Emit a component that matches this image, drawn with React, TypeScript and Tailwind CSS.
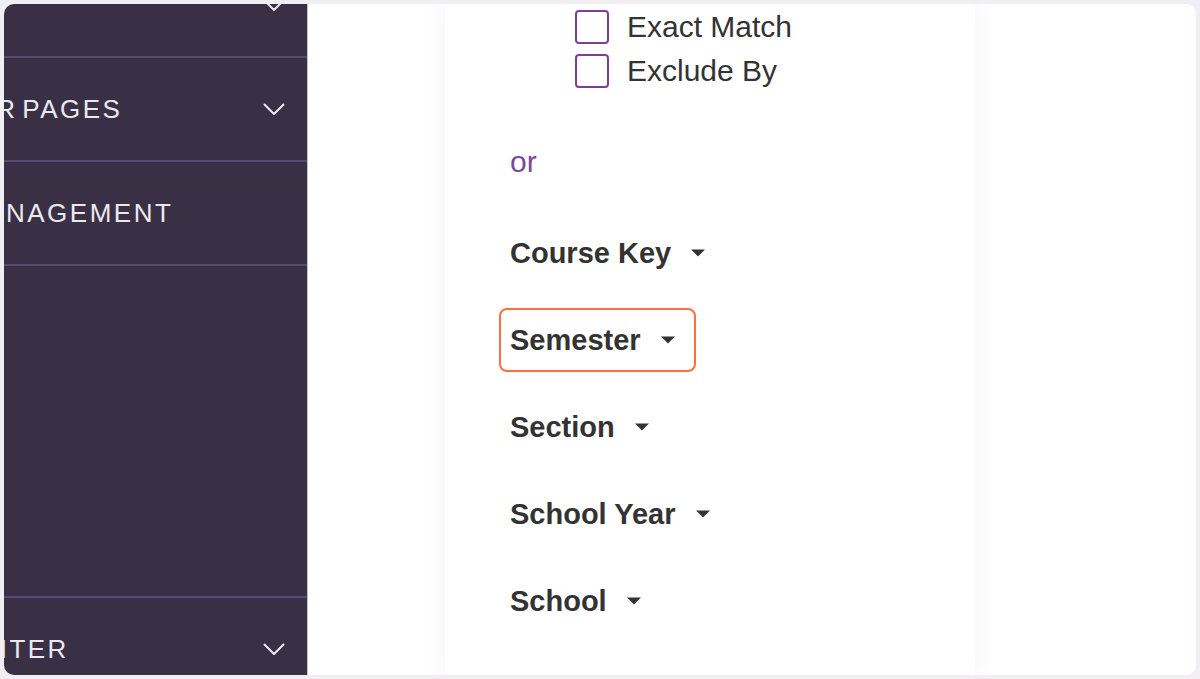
import React from 'react';

const Chevron = () => (
  <svg width="22" height="13" viewBox="0 0 22 13" fill="none" className="shrink-0">
    <polyline points="1.5,1.5 11,11 20.5,1.5" stroke="#ebe9ee" strokeWidth="2" strokeLinecap="round" strokeLinejoin="round" />
  </svg>
);

const Caret = () => (
  <svg width="16" height="8" viewBox="0 0 16 8" className="shrink-0 ml-[19px]">
    <polygon points="1,0.5 15,0.5 8,7.5" fill="#333333" />
  </svg>
);

function NavRow({ label, offset, chevron, className }: { label: string; offset: string; chevron?: boolean; className?: string }) {
  return (
    <div className={`h-[104px] shrink-0 flex items-center justify-between pr-[22px] border-[#574a76] ${className ?? ''}`}>
      <span className={`whitespace-nowrap text-[26px] tracking-[2.5px] [word-spacing:-5px] text-[#ebe9ee] ${offset}`}>{label}</span>
      {chevron && <Chevron />}
    </div>
  );
}

function Filter({ label, active }: { label: string; active?: boolean }) {
  return (
    <div className="relative inline-flex h-[64px] items-center self-start">
      <span className="text-[29px] font-bold text-[#333333] leading-none">{label}</span>
      <Caret />
      {active && (
        <div className="absolute top-0 bottom-0 -left-[11px] -right-[20px] rounded-[8px] border-[2.5px] border-[#ff6f3c]" />
      )}
    </div>
  );
}

export default function App() {
  return (
    <div
      className="w-[1200px] h-[679px] bg-[#f1eff4] p-[4px]"
      style={{ fontFamily: '"Liberation Sans", Arial, sans-serif' }}
    >
      <div className="flex h-full overflow-hidden rounded-[10px] bg-white">
        <aside className="w-[304px] shrink-0 overflow-hidden flex flex-col bg-[#3a3046] border-r border-[#c4c0ca]">
          <NavRow label="" offset="" chevron className="-mt-[50px] border-b-2" />
          <NavRow label="OTHER PAGES" offset="-ml-[90px]" chevron className="border-b-2" />
          <NavRow label="MANAGEMENT" offset="-ml-[42px]" className="border-b-2" />
          <div className="h-[330px] shrink-0" />
          <NavRow label="CENTER" offset="-ml-[57px]" chevron className="border-t-2" />
        </aside>

        <main className="flex-1 h-full">
          <div className="ml-[137px] w-[530px] h-full bg-white shadow-[0_0_22px_rgba(0,0,0,0.05)] pl-[65px] flex flex-col">
            <div className="pl-[65px] pt-[1px] flex flex-col">
              {['Exact Match', 'Exclude By'].map((t) => (
                <label key={t} className="h-[44px] flex items-center gap-[18px]">
                  <span className="w-[34px] h-[34px] rounded-[4px] border-2 border-[#7a3f9d] bg-white shrink-0" />
                  <span className="text-[30px] text-[#333333] leading-none">{t}</span>
                </label>
              ))}
            </div>

            <div className="mt-[51px] h-[36px] flex items-center text-[30px] text-[#774a9b] leading-none">or</div>

            <div className="mt-[41px] flex flex-col gap-[23px]">
              <Filter label="Course Key" />
              <Filter label="Semester" active />
              <Filter label="Section" />
              <Filter label="School Year" />
              <Filter label="School" />
            </div>
          </div>
        </main>
      </div>
    </div>
  );
}
